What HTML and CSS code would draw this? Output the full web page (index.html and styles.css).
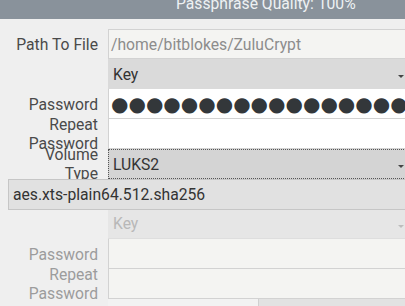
FILE: index.html
```html
<!DOCTYPE html>
<html lang="en">
<head>
  <meta charset="UTF-8">
  <title>Create Volume</title>
  <link rel="stylesheet" href="styles.css">
</head>
<body>

  <div class="quality-bar">
    <span class="quality-text">Passphrase Quality: 100%</span>
  </div>

  <div class="form">
    <label class="field-label">Path To File</label>
    <div class="line-edit path">/home/bitblokes/ZuluCrypt</div>

    <span class="field-label"></span>
    <div class="combo">Key<i class="arrow"></i></div>

    <label class="field-label">Password</label>
    <div class="line-edit secret"><span class="dots">●●●●●●●●●●●●●●●●●●●●●●●●●●</span></div>

    <label class="field-label">Repeat<br>Password</label>
    <div class="line-edit secret"></div>

    <label class="field-label">Volume<br>Type</label>
    <div class="combo focused">LUKS2<i class="arrow"></i></div>

    <span class="field-label"></span>
    <div class="combo">aes.xts-plain64.512.sha256<i class="arrow"></i></div>

    <span class="field-label"></span>
    <div class="combo disabled">Key<i class="arrow"></i></div>

    <label class="field-label disabled">Password</label>
    <div class="line-edit disabled"></div>

    <label class="field-label disabled">Repeat<br>Password</label>
    <div class="line-edit disabled"></div>

    <span class="field-label"></span>
    <div class="buttons">
      <div class="button light"></div>
      <div class="button"></div>
    </div>

    <!-- cipher list is open over the form -->
    <div class="popup">aes.xts-plain64.512.sha256</div>
  </div>

</body>
</html>
```

FILE: styles.css
```css
body {
  margin: 0;
  width: 405px;
  height: 306px;
  overflow: hidden;
  background-color: #efefef;
  font-family: Roboto, "Liberation Sans", sans-serif;
  font-size: 15.7px;
  color: #3c3c3c;
}

.quality-bar {
  height: 19px;
  background-color: #89929b;
  padding-left: 176px;
  overflow: hidden;
}

.quality-text {
  display: block;
  line-height: 7px;
  color: #eef1f3;
  white-space: nowrap;
}

.form {
  position: relative;
  display: grid;
  grid-template-columns: 98px 302px;
  grid-auto-rows: 30px;
  column-gap: 10px;
  margin-top: 10px;
  width: 410px;
}

.field-label {
  display: flex;
  align-items: center;
  justify-content: flex-end;
  text-align: right;
  line-height: 19px;
  color: #4a4a4a;
  white-space: nowrap;
}

.field-label.disabled {
  color: #9c9c9c;
}

.line-edit {
  box-sizing: border-box;
  display: flex;
  align-items: center;
  padding-left: 2px;
  border: 1px solid #d2d2d2;
  background-color: #f4f4f2;
  white-space: nowrap;
  overflow: hidden;
}

.line-edit.path {
  color: #8c8c8c;
}

.line-edit.secret {
  background-color: #fff;
  border-top: none;
}

.line-edit.disabled {
  background-color: #f4f4f2;
  border-top: none;
}

.dots {
  font-family: "DejaVu Sans", sans-serif;
  font-size: 20px;
  color: #33373a;
}

.combo {
  box-sizing: border-box;
  position: relative;
  display: flex;
  align-items: center;
  padding-left: 5px;
  background-color: #dadada;
  color: #333;
  white-space: nowrap;
}

.combo.focused {
  background-color: #d4d4d4;
  border: 1px dotted #555;
  border-right: none;
  padding-left: 4px;
}

.combo.disabled {
  background-color: #e6e6e6;
  color: #b8b8b8;
  border-bottom: 1px solid #dedede;
}

.arrow {
  position: absolute;
  right: 6px;
  top: 50%;
  margin-top: 1px;
  border-left: 3px solid transparent;
  border-right: 3px solid transparent;
  border-top: 3px solid #444;
}

.combo.disabled .arrow {
  border-top-color: #bdbdbd;
}

.buttons {
  display: flex;
}

.button {
  flex: 1;
  background-color: #e2e2e2;
  border-left: 1px solid #d0d0d0;
}

.button.light {
  flex: 0 0 150px;
  background-color: #f2f2f2;
  border-left: none;
}

.popup {
  position: absolute;
  left: 8px;
  top: 150px;
  box-sizing: border-box;
  width: 410px;
  height: 31px;
  padding-left: 4px;
  display: flex;
  align-items: center;
  background-color: #e1e1e1;
  border: 1px solid #c6c6c6;
  color: #333;
  white-space: nowrap;
}
```
